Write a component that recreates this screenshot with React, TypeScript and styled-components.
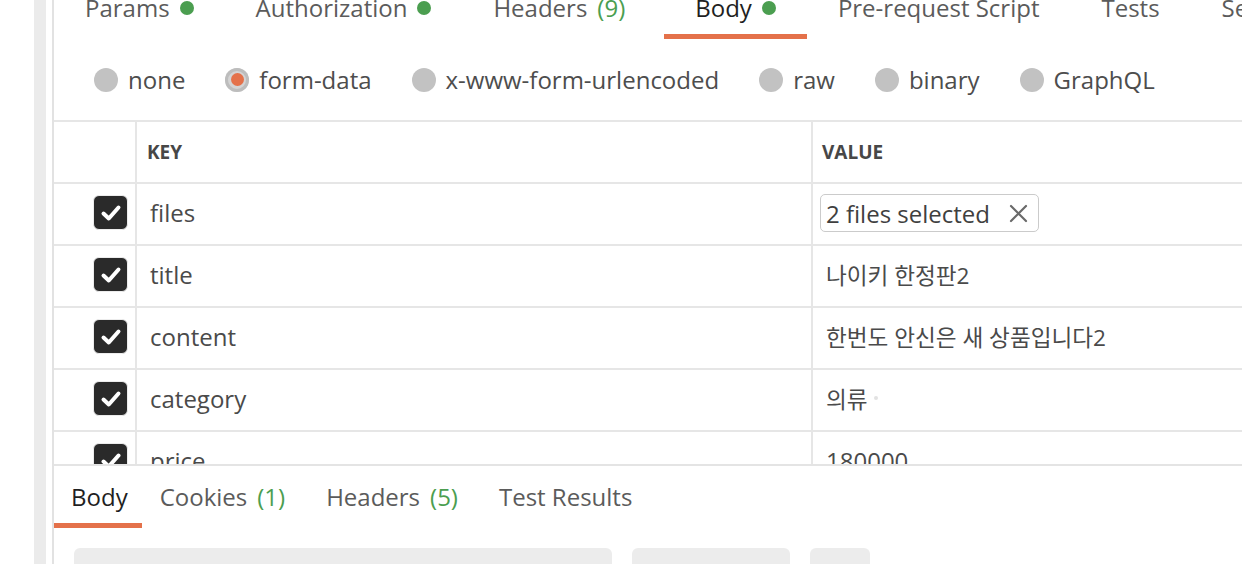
import React from "react";
import styled, { createGlobalStyle, css } from "styled-components";

const ORANGE = "#e4714a";
const GREEN = "#4b9e50";
const LINE = "#e6e6e6";

const GlobalStyle = createGlobalStyle`
  html, body { margin: 0; padding: 0; background: #fff; }
  body { font-family: "Open Sans", "Noto Sans CJK KR", sans-serif; }
  * { box-sizing: border-box; }
`;

const Page = styled.div`
  width: 1242px;
  height: 564px;
  overflow: hidden;
  display: flex;
  background: #fff;
`;

const Gutter = styled.div`
  width: 34px;
  flex-shrink: 0;
`;

const Rail = styled.div`
  width: 12px;
  flex-shrink: 0;
  background: #ebebeb;
  margin-right: 6px;
`;

const Main = styled.div`
  flex: 1;
  min-width: 0;
  border-left: 2px solid #e2e2e2;
  display: flex;
  flex-direction: column;
  overflow: hidden;
`;

const TabBar = styled.div`
  display: flex;
  height: 39px;
  align-items: flex-end;
  flex-shrink: 0;
  white-space: nowrap;
`;

const Tab = styled.div<{ $active?: boolean; $pr?: number }>`
  display: flex;
  align-items: center;
  gap: 10px;
  padding: 0 ${(p) => p.$pr ?? 31}px 10px 31px;
  line-height: 32px;
  font-size: 24px;
  color: ${(p) => (p.$active ? "#1f1f1f" : "#5b5b5b")};
  border-bottom: 5px solid ${(p) => (p.$active ? ORANGE : "transparent")};
  flex-shrink: 0;
`;

const Dot = styled.span`
  width: 14px;
  height: 14px;
  border-radius: 50%;
  background: ${GREEN};
  display: inline-block;
`;

const Count = styled.span`
  color: ${GREEN};
`;

const RadioRow = styled.div`
  display: flex;
  align-items: center;
  height: 81px;
  padding-left: 40px;
  gap: 40px;
  flex-shrink: 0;
  white-space: nowrap;
`;

const RadioItem = styled.div`
  display: flex;
  align-items: center;
  gap: 10px;
  font-size: 24px;
  color: #4d4d4d;
`;

const RadioCircle = styled.span<{ $checked?: boolean }>`
  width: 24px;
  height: 24px;
  border-radius: 50%;
  background: #c2c2c2;
  display: flex;
  align-items: center;
  justify-content: center;
  ${(p) =>
    p.$checked &&
    css`
      background: #d4d4d4;
      box-shadow: inset 0 0 0 3px #bdbdbd;
      &::after {
        content: "";
        width: 13px;
        height: 13px;
        border-radius: 50%;
        background: ${ORANGE};
      }
    `}
`;

const TableArea = styled.div`
  flex: 1;
  min-height: 0;
  overflow: hidden;
  border-top: 2px solid ${LINE};
`;

const Row = styled.div`
  display: grid;
  grid-template-columns: 83px 676px 1fr;
  height: 62px;
  border-bottom: 2px solid ${LINE};
`;

const Cell = styled.div<{ $kind?: "check" | "key" | "value" }>`
  display: flex;
  align-items: center;
  min-width: 0;
  white-space: nowrap;
  font-size: 24px;
  color: #4a4a4a;
  ${(p) => p.$kind !== "value" && css`border-right: 2px solid ${LINE};`}
  ${(p) => p.$kind === "check" && css`justify-content: flex-end; padding-right: 7px;`}
  ${(p) => p.$kind === "key" && css`padding: 0 0 4px 13px;`}
  ${(p) => p.$kind === "value" && css`padding: 0 0 4px 13px;`}
`;

const ValueText = styled.span`
  font-size: 22.6px;
`;

const HeadCell = styled(Cell)`
  font-size: 19px;
  font-weight: 700;
  color: #474747;
  padding-bottom: 0;
  padding-left: ${(p) => (p.$kind === "value" ? 9 : p.$kind === "key" ? 10 : 0)}px;
`;

const Checkbox = styled.span`
  width: 35px;
  height: 35px;
  border-radius: 6px;
  background: #2a2a2a;
  border: 1.5px solid #ececec;
  display: flex;
  align-items: center;
  justify-content: center;
  margin-top: -3px;
`;

const FileChip = styled.div`
  display: flex;
  align-items: center;
  height: 38px;
  margin-left: -6px;
  margin-bottom: -2px;
  padding: 0 10px 0 5px;
  border: 1.5px solid #cbcbcb;
  border-radius: 5px;
  color: #3f3f3f;
  gap: 19px;
`;

const TrailDot = styled.span`
  display: inline-block;
  width: 4px;
  height: 4px;
  border-radius: 50%;
  background: #e2e2e2;
  margin-left: 6px;
`;

const ResponsePanel = styled.div`
  height: 100px;
  flex-shrink: 0;
  border-top: 2px solid #e4e4e4;
  display: flex;
  flex-direction: column;
`;

const ResponseTabs = styled.div`
  display: flex;
  white-space: nowrap;
`;

const ResponseTab = styled.div<{ $active?: boolean; $pl: number; $pr: number }>`
  display: flex;
  align-items: center;
  gap: 10px;
  padding: 15px ${(p) => p.$pr}px 10px ${(p) => p.$pl}px;
  line-height: 32px;
  font-size: 24px;
  color: ${(p) => (p.$active ? "#1f1f1f" : "#5b5b5b")};
  border-bottom: 5px solid ${(p) => (p.$active ? ORANGE : "transparent")};
`;

const ToolRow = styled.div`
  display: flex;
  gap: 20px;
  padding: 20px 0 0 20px;
`;

const ToolBox = styled.div<{ $w: number }>`
  width: ${(p) => p.$w}px;
  height: 40px;
  border-radius: 6px;
  background: #ececec;
  flex-shrink: 0;
`;

const CheckIcon = () => (
  <svg width="24" height="24" viewBox="0 0 24 24" fill="none">
    <path d="M4.5 12.5 L9.8 17.5 L19.5 6.5" stroke="#fff" strokeWidth="4" strokeLinecap="round" strokeLinejoin="round" />
  </svg>
);

const CloseIcon = () => (
  <svg width="19" height="19" viewBox="0 0 19 19" fill="none">
    <path d="M2 2 L17 17 M17 2 L2 17" stroke="#6a6a6a" strokeWidth="2.2" strokeLinecap="round" />
  </svg>
);

const rows: { key: string; value: React.ReactNode }[] = [
  {
    key: "files",
    value: (
      <FileChip>
        <span>2 files selected</span>
        <CloseIcon />
      </FileChip>
    ),
  },
  { key: "title", value: <ValueText>나이키 한정판2</ValueText> },
  { key: "content", value: <ValueText>한번도 안신은 새 상품입니다2</ValueText> },
  {
    key: "category",
    value: (
      <>
        <ValueText>의류</ValueText>
        <TrailDot />
      </>
    ),
  },
  { key: "price", value: "180000" },
];

export default function App() {
  return (
    <Page>
      <GlobalStyle />
      <Gutter />
      <Rail />
      <Main>
        <TabBar>
          <Tab>
            Params <Dot />
          </Tab>
          <Tab>
            Authorization <Dot />
          </Tab>
          <Tab $pr={39}>
            Headers <Count>(9)</Count>
          </Tab>
          <Tab $active>
            Body <Dot />
          </Tab>
          <Tab>Pre-request Script</Tab>
          <Tab>Tests</Tab>
          <Tab>Settings</Tab>
        </TabBar>
        <RadioRow>
          <RadioItem>
            <RadioCircle />
            none
          </RadioItem>
          <RadioItem>
            <RadioCircle $checked />
            form-data
          </RadioItem>
          <RadioItem>
            <RadioCircle />
            x-www-form-urlencoded
          </RadioItem>
          <RadioItem>
            <RadioCircle />
            raw
          </RadioItem>
          <RadioItem>
            <RadioCircle />
            binary
          </RadioItem>
          <RadioItem>
            <RadioCircle />
            GraphQL
          </RadioItem>
        </RadioRow>
        <TableArea>
          <Row>
            <HeadCell $kind="check" />
            <HeadCell $kind="key">KEY</HeadCell>
            <HeadCell $kind="value">VALUE</HeadCell>
          </Row>
          {rows.map((r) => (
            <Row key={r.key}>
              <Cell $kind="check">
                <Checkbox>
                  <CheckIcon />
                </Checkbox>
              </Cell>
              <Cell $kind="key">{r.key}</Cell>
              <Cell $kind="value">{r.value}</Cell>
            </Row>
          ))}
        </TableArea>
        <ResponsePanel>
          <ResponseTabs>
            <ResponseTab $active $pl={17} $pr={14}>Body</ResponseTab>
            <ResponseTab $pl={18} $pr={21}>
              Cookies <Count>(1)</Count>
            </ResponseTab>
            <ResponseTab $pl={20} $pr={20}>
              Headers <Count>(5)</Count>
            </ResponseTab>
            <ResponseTab $pl={21} $pr={20}>Test Results</ResponseTab>
          </ResponseTabs>
          <ToolRow>
            <ToolBox $w={538} />
            <ToolBox $w={158} />
            <ToolBox $w={60} />
          </ToolRow>
        </ResponsePanel>
      </Main>
    </Page>
  );
}
